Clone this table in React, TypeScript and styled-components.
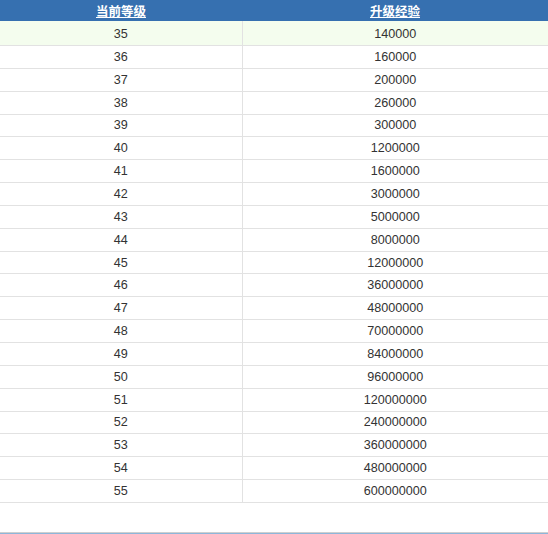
import React from "react";
import styled, { createGlobalStyle } from "styled-components";

const Global = createGlobalStyle`
  html, body { margin: 0; padding: 0; background: #fff; }
  body { font-family: "Liberation Sans", Arial, "Noto Sans CJK SC", sans-serif; }
`;

const Page = styled.div`
  width: 548px;
  height: 534px;
  display: flex;
  flex-direction: column;
  overflow: hidden;
`;

const Table = styled.table`
  width: 548px;
  border-collapse: collapse;
  table-layout: fixed;
`;

const HeadCell = styled.th`
  height: 21px;
  padding: 0;
  background: #3670b0;
  color: #fff;
  font-family: "Noto Sans CJK SC", sans-serif;
  font-weight: bold;
  font-size: 12.5px;
  line-height: 21px;
  text-align: center;
  text-decoration: underline;
`;

const Row = styled.tr<{ $highlight?: boolean }>`
  background: ${(p) => (p.$highlight ? "#f4fdee" : "#fff")};
  border-bottom: 1px solid #e2e2e2;
`;

const Cell = styled.td<{ $divider?: boolean; $first?: boolean }>`
  height: ${(p) => (p.$first ? "22px" : "21.85px")};
  padding: ${(p) => (p.$first ? "2px 0 0" : "0")};
  text-align: center;
  font-size: 12.6px;
  color: #333;
  line-height: 20px;
  border-right: ${(p) => (p.$divider ? "1px solid #e2e2e2" : "none")};
`;

const Spacer = styled.div`
  flex: 1;
`;

const Footer = styled.div`
  height: 1px;
  border-top: 1px solid #cfcfcf;
  background: #8db6da;
`;

const data: [number, number][] = [
  [35, 140000],
  [36, 160000],
  [37, 200000],
  [38, 260000],
  [39, 300000],
  [40, 1200000],
  [41, 1600000],
  [42, 3000000],
  [43, 5000000],
  [44, 8000000],
  [45, 12000000],
  [46, 36000000],
  [47, 48000000],
  [48, 70000000],
  [49, 84000000],
  [50, 96000000],
  [51, 120000000],
  [52, 240000000],
  [53, 360000000],
  [54, 480000000],
  [55, 600000000],
];

export default function App() {
  return (
    <Page>
      <Global />
      <Table>
        <colgroup>
          <col style={{ width: 242 }} />
          <col style={{ width: 306 }} />
        </colgroup>
        <thead>
          <tr>
            <HeadCell>当前等级</HeadCell>
            <HeadCell>升级经验</HeadCell>
          </tr>
        </thead>
        <tbody>
          {data.map(([lvl, exp], i) => (
            <Row key={lvl} $highlight={i === 0}>
              <Cell $divider $first={i === 0}>{lvl}</Cell>
              <Cell $first={i === 0}>{exp}</Cell>
            </Row>
          ))}
        </tbody>
      </Table>
      <Spacer />
      <Footer />
    </Page>
  );
}
